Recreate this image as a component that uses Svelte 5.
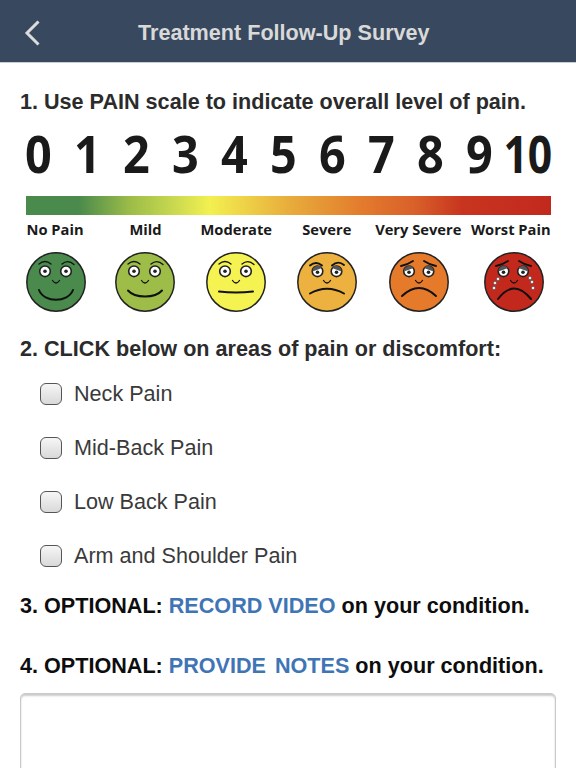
<script>
  const digits = [0, 1, 2, 3, 4, 5, 6, 7, 8, 9, 10];
  const labels = ['No Pain', 'Mild', 'Moderate', 'Severe', 'Very Severe', 'Worst Pain'];
  const areas = ['Neck Pain', 'Mid-Back Pain', 'Low Back Pain', 'Arm and Shoulder Pain'];
  const happyBrows = ['M13 12Q19 7 25 12', 'M36 12Q42 7 48 12.5'];
  const faces = [
    { fill: '#4a8a4c', mouth: 'M13 38C18 51 42 51 47 38', brows: happyBrows, eyes: [19, 40], lid: false },
    { fill: '#9dbd48', mouth: 'M13 38.5C20 46.5 40 46.5 47 38.5', brows: happyBrows, eyes: [19, 40], lid: false },
    { fill: '#f5f352', mouth: 'M13 39.5Q30 41.5 47 39.5', brows: happyBrows, eyes: [19, 40], lid: false },
    { fill: '#ecb13f', mouth: 'M13 41.5Q30 32 47 41.5', brows: ['M13 13.5Q19 8.5 25 13.5', 'M35 13.5Q41 8 47 13'], eyes: [20.5, 39.5], lid: true },
    { fill: '#e67a2b', mouth: 'M13 44Q30 28 47 44', brows: ['M12 14Q18 13 24 9', 'M35 9Q41 13 47 14'], eyes: [20, 39.5], lid: true },
    { fill: '#c3281d', mouth: 'M14 47Q30 26 47 47', brows: ['M12 14Q18 13 24 9', 'M35 9Q41 13 47 14'], eyes: [19.5, 39], lid: true, tears: true }
  ];
  const tears = [[14, 27], [11, 31], [10, 36], [46, 26], [48, 30], [49, 36]];
  const lidPath = (x, left) =>
    left
      ? `M${x - 5} 19.5A5.3 5.3 0 0 1 ${x + 3.5} 15L${x + 4.5} 16Z`
      : `M${x + 5} 19.5A5.3 5.3 0 0 0 ${x - 3.5} 15L${x - 4.5} 16Z`;
</script>

<header class="bar">
  <button class="back" aria-label="Back">
    <svg viewBox="0 0 18 30" width="18" height="30"><path d="M15.5 3.5 4 15l11.5 11.5" /></svg>
  </button>
  <h1>Treatment Follow-Up Survey</h1>
</header>

<main>
  <h2 class="first">1. Use PAIN scale to indicate overall level of pain.</h2>

  <div class="digits">
    {#each digits as d}
      <span class:ten={d === 10}>{d}</span>
    {/each}
  </div>
  <div class="gradient"></div>
  <div class="labels">
    {#each labels as l}
      <span>{l}</span>
    {/each}
  </div>
  <div class="faces">
    {#each faces as f}
      <svg class="face" viewBox="0 0 60 60" width="60" height="60">
        <circle cx="30" cy="30" r="29.2" fill={f.fill} class="head" />
        {#each f.eyes as x, i}
          <circle cx={x} cy="19.3" r="5.3" fill="#fff" class="eye" />
          {#if f.lid}
            <path d={lidPath(x, i === 0)} fill="#555" />
          {/if}
          <circle cx={x} cy={f.lid ? 20.3 : 19.3} r="1.8" fill="#222" />
        {/each}
        {#each f.brows as b}
          <path d={b} class="line" class:thick={f.lid} />
        {/each}
        <path d="M26.5 28.5Q30 33.5 33.5 28.5" class="line" />
        <path d={f.mouth} class="line mouth" />
        {#if f.tears}
          {#each tears as t}
            <circle cx={t[0]} cy={t[1]} r="1.7" fill="#e8eef0" stroke="#333" stroke-width=".5" />
          {/each}
        {/if}
      </svg>
    {/each}
  </div>

  <h2 class="second">2. CLICK below on areas of pain or discomfort:</h2>
  <ul>
    {#each areas as a}
      <li><label><input type="checkbox" /><span>{a}</span></label></li>
    {/each}
  </ul>

  <h2 class="opt third">3. OPTIONAL: <a href="#video">RECORD VIDEO</a> on your condition.</h2>
  <h2 class="opt fourth">4. OPTIONAL: <a class="notes" href="#notes">PROVIDE NOTES</a> on your condition.</h2>
  <textarea aria-label="Notes"></textarea>
</main>

<style>
  :global(body) {
    margin: 0;
    background: #fff;
    overflow: hidden;
    font-family: "Liberation Sans", Arial, sans-serif;
  }
  .bar {
    height: 63px;
    padding-top: 3px;
    background: #38495f;
    border-bottom: 1px solid #c9ced6;
    box-sizing: border-box;
    display: flex;
    align-items: center;
  }
  .back {
    background: none;
    border: 0;
    padding: 0;
    margin-left: 23px;
    display: flex;
  }
  .back path {
    fill: none;
    stroke: #dcdcdc;
    stroke-width: 3;
  }
  h1 {
    margin: 0 0 0 97px;
    font-size: 21.6px;
    font-weight: 700;
    color: #d9d9d9;
    white-space: nowrap;
  }
  main {
    padding: 0 20px;
    height: 705px;
    overflow: hidden;
  }
  h2 {
    margin: 0;
    font-size: 21.6px;
    line-height: 24px;
    font-weight: 700;
    color: #2b2b2b;
    white-space: nowrap;
  }
  .first { margin-top: 27px; }
  .digits {
    display: grid;
    grid-template-columns: repeat(11, 49px);
    margin: 8px 0 0 -6px;
    height: 62px;
    align-items: center;
  }
  .digits span {
    font-family: "Open Sans", sans-serif;
    font-weight: 700;
    font-size: 52px;
    line-height: 62px;
    color: #1a1a1a;
    text-align: center;
    transform: scaleX(.9);
  }
  .digits .ten {
    transform: translateX(-5px) scaleX(.82);
    white-space: nowrap;
    text-align: left;
  }
  .gradient {
    height: 19px;
    margin: 12px 0 0 6px;
    width: 525px;
    background: linear-gradient(90deg, #4a8a4c 0%, #4a8a4c 10%, #9dbd48 20%, #c8d850 28%, #f3f050 35%, #e8ad3c 50%, #e37b2d 64%, #d9602a 74%, #c8351f 83%, #c2291e 100%);
  }
  .labels {
    display: grid;
    grid-template-columns: 90px 91px 90.5px 90.5px 92.5px 92.5px;
    margin: 5px 0 0 -10px;
  }
  .labels span {
    font-family: "Open Sans", sans-serif;
    font-weight: 700;
    font-size: 14.7px;
    line-height: 18px;
    color: #1a1a1a;
    text-align: center;
    white-space: nowrap;
  }
  .faces {
    display: grid;
    grid-template-columns: 89px 90px 91px 91.5px 93.5px 95px;
    margin: 14px 0 0 -9px;
    justify-items: center;
  }
  .face { display: block; }
  .head { stroke: #222; stroke-width: 1.5; }
  .eye { stroke: #222; stroke-width: 1.6; }
  .line {
    fill: none;
    stroke: #111;
    stroke-width: 1.3;
    stroke-linecap: round;
  }
  .thick { stroke-width: 1.9; }
  .mouth { stroke-width: 2; }
  .second { margin-top: 25px; }
  ul {
    list-style: none;
    margin: 11px 0 0;
    padding: 0 0 0 20px;
  }
  li { height: 54px; }
  label {
    display: flex;
    align-items: center;
    gap: 12px;
    height: 44px;
    font-size: 21.6px;
    color: #3a3a3a;
  }
  input {
    appearance: none;
    margin: 0;
    width: 22px;
    height: 22px;
    box-sizing: border-box;
    border: 1.3px solid #555;
    border-radius: 6px;
    background: linear-gradient(#f6f6f6, #d9d9d9);
    flex: none;
  }
  .opt { color: #0d0d0d; }
  .opt a {
    color: #3f74b5;
    text-decoration: none;
  }
  .notes { word-spacing: 3px; }
  .third { margin-top: 6px; }
  .fourth { margin-top: 36px; }
  textarea {
    display: block;
    box-sizing: border-box;
    width: 536px;
    height: 120px;
    margin-top: 15px;
    border: 1px solid #c9c9c9;
    border-radius: 5px;
    background: #fff;
    box-shadow: inset 0 2px 2px #ccc;
    resize: none;
    outline: none;
  }
</style>
